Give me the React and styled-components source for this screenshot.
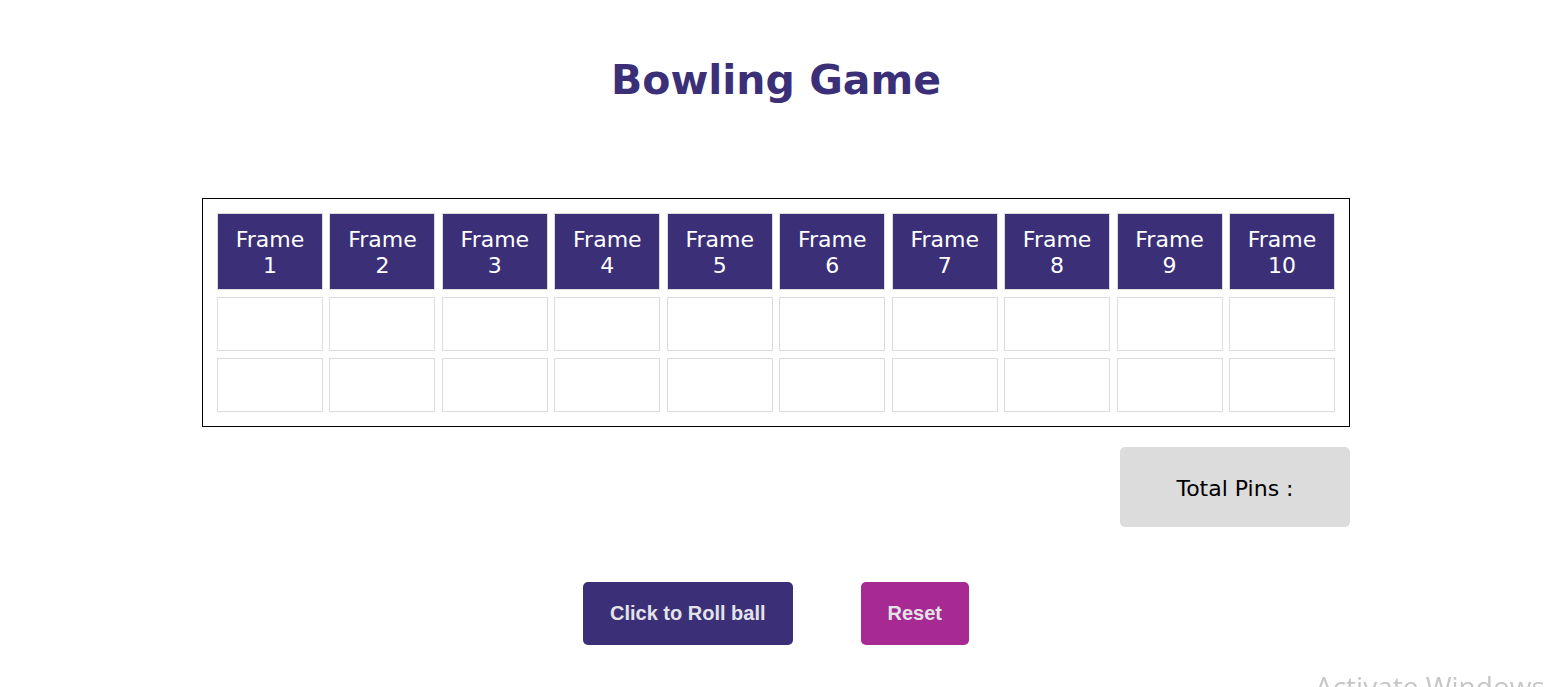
import React from 'react'
import styled, { createGlobalStyle } from 'styled-components'

const GlobalStyle = createGlobalStyle`
    body {
        margin: 0;
        background: #fff;
        font-family: "DejaVu Sans", Verdana, sans-serif;
    }
`

const Page = styled.div`
    width: 1552px;
    display: flex;
    flex-direction: column;
    align-items: center;
`

const Title = styled.h1`
    margin: 56px 0 0;
    font-size: 41px;
    line-height: 48px;
    font-weight: bold;
    color: #3b2f78;
`

const Board = styled.div`
    margin-top: 94px;
    width: 1148px;
    box-sizing: border-box;
    border: 1px solid #000;
    padding: 14px;
    display: grid;
    grid-template-columns: repeat(10, 1fr);
    column-gap: 6.5px;
    row-gap: 7px;
`

const Cell = styled.div`
    box-sizing: border-box;
    border: 1px solid #dcdcdc;
    height: ${p => p.head ? 77 : 54}px;
    background: ${p => p.head ? '#3b2f78' : '#fff'};
    color: #fff;
    font-size: 22px;
    line-height: 26px;
    display: flex;
    align-items: center;
    justify-content: center;
    text-align: center;
    padding-top: 2px;
`

const Footer = styled.div`
    width: 1148px;
    display: flex;
    justify-content: flex-end;
    margin-top: 20px;
`

const TotalPins = styled.div`
    width: 230px;
    height: 80px;
    background: #dcdcdc;
    border-radius: 5px;
    display: flex;
    align-items: center;
    justify-content: center;
    font-size: 22px;
    color: #000;
    padding-top: 2px;
    box-sizing: border-box;
`

const Actions = styled.div`
    display: flex;
    gap: 68px;
    margin-top: 55px;
`

const Button = styled.button`
    height: 63px;
    padding: 0 ${p => p.pad}px;
    border: none;
    border-radius: 5px;
    background: ${p => p.bg};
    color: #e3e3e8;
    font-family: "Liberation Sans", Arial, sans-serif;
    font-weight: bold;
    font-size: 20px;
    cursor: pointer;
`

const Watermark = styled.div`
    position: fixed;
    left: 1315px;
    top: 668px;
    font-family: "Open Sans", "Noto Sans", sans-serif;
    font-size: 28px;
    line-height: 36px;
    color: rgba(160, 160, 160, 0.6);
    white-space: nowrap;
    pointer-events: none;
`

const frames = [1, 2, 3, 4, 5, 6, 7, 8, 9, 10]

export default function App() {
    return (
        <Page>
            <GlobalStyle />
            <Title>Bowling Game</Title>
            <Board>
                {frames.map(n => <Cell head key={'h' + n}>Frame<br />{n}</Cell>)}
                {frames.map(n => <Cell key={'a' + n} />)}
                {frames.map(n => <Cell key={'b' + n} />)}
            </Board>
            <Footer>
                <TotalPins>Total Pins :</TotalPins>
            </Footer>
            <Actions>
                <Button bg="#3b2f78" pad={27}>Click to Roll ball</Button>
                <Button bg="#a62a91" pad={27}>Reset</Button>
            </Actions>
            <Watermark>Activate Windows</Watermark>
        </Page>
    )
}
